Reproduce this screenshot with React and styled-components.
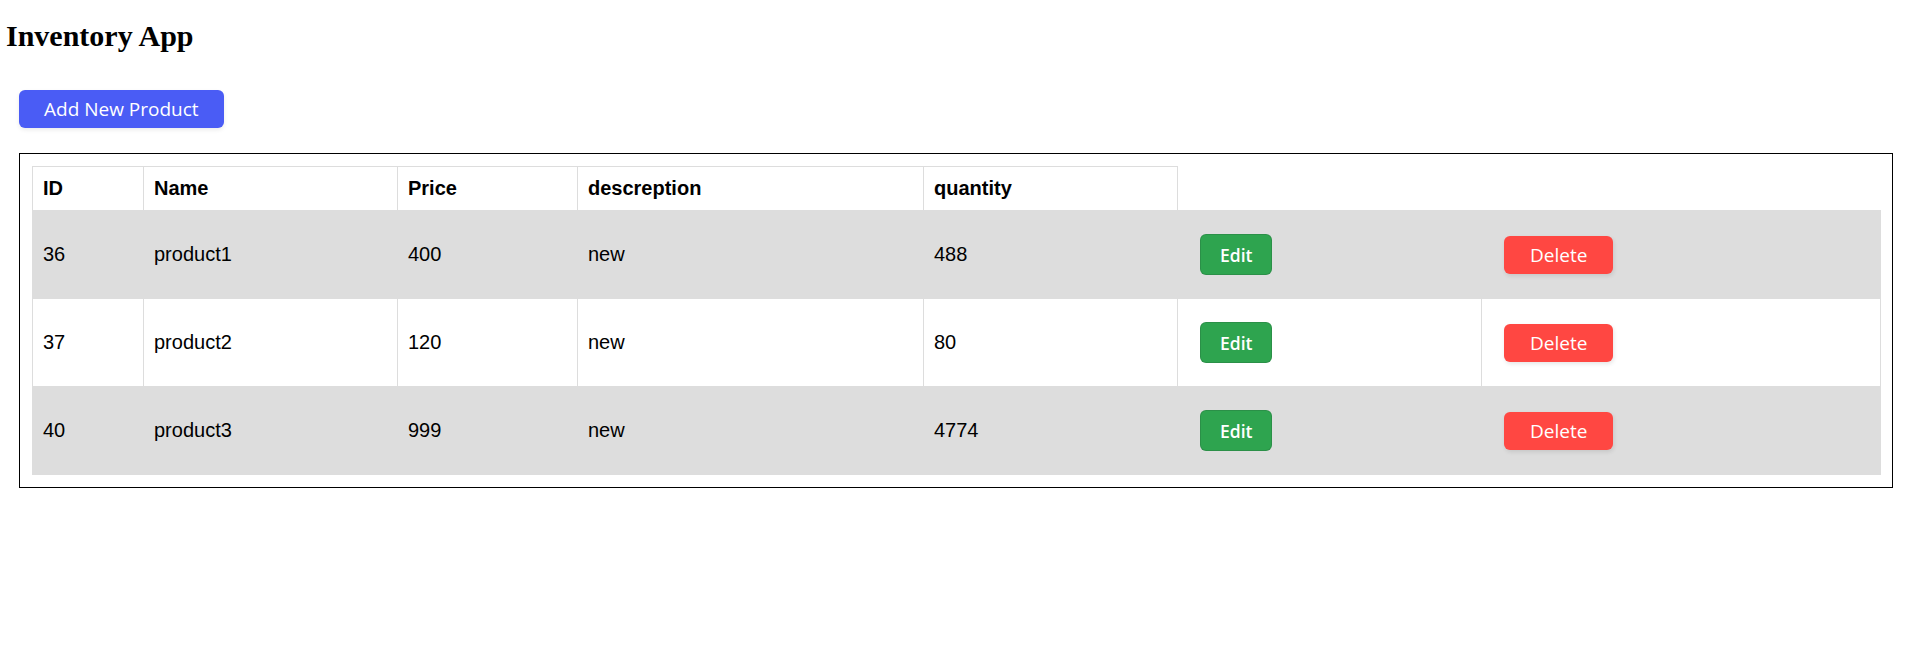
import React from "react";
import styled, { createGlobalStyle } from "styled-components";

const GlobalStyle = createGlobalStyle`
    body {
        margin: 0;
        background: #fff;
        font-family: "Liberation Serif", "Times New Roman", serif;
    }
`;

const Title = styled.h2`
    margin: 19px 0 0 6px;
    font-size: 30px;
    font-weight: 700;
    color: #000;
`;

const Main = styled.div`
    margin: 37px 14px 0 19px;
`;

const AddButton = styled.button`
    height: 38px;
    padding: 0 25px;
    border: none;
    border-radius: 6px;
    background-color: #4a5cf5;
    color: #fff;
    font-family: "Open Sans", "Noto Sans", sans-serif;
    font-size: 19px;
    box-shadow: rgba(0, 0, 0, 0.08) 0 2px 4px;
    cursor: pointer;
`;

const Box = styled.div`
    margin-top: 25px;
    border: 1px solid #000;
    padding: 12px;
`;

const Table = styled.table`
    width: 100%;
    border-collapse: collapse;
    table-layout: fixed;
    font-family: "Liberation Sans", Arial, sans-serif;
    font-size: 20px;
    color: #000;
`;

const Row = styled.tr`
    background-color: ${(props) => (props.$striped ? "#dddddd" : "#fff")};
`;

const Head = styled.th`
    border: 1px solid #dddddd;
    padding: 10px;
    text-align: left;
    font-weight: 700;
`;

const Cell = styled.td`
    border: 1px solid #dddddd;
    padding: 10px;
    height: 67px;
    text-align: left;
    vertical-align: middle;
`;

const EditButton = styled.button`
    margin-left: 12px;
    height: 41px;
    padding: 0 19px;
    border: 1px solid rgba(27, 31, 35, 0.15);
    border-radius: 6px;
    background-color: #2ea44f;
    color: #fff;
    font-family: "Open Sans", "Noto Sans", sans-serif;
    font-size: 17.5px;
    font-weight: 600;
    cursor: pointer;
`;

const DeleteButton = styled.button`
    margin-left: 12px;
    height: 38px;
    padding: 0 26px;
    border: none;
    border-radius: 6px;
    background-color: #ff4742;
    color: #fff;
    font-family: "Open Sans", "Noto Sans", sans-serif;
    font-size: 19px;
    box-shadow: rgba(0, 0, 0, 0.1) 1px 2px 4px;
    cursor: pointer;
`;

const columns = [111, 254, 180, 346, 254, 304, 399];

const products = [
    { id: 36, name: "product1", price: 400, descreption: "new", quantity: 488 },
    { id: 37, name: "product2", price: 120, descreption: "new", quantity: 80 },
    { id: 40, name: "product3", price: 999, descreption: "new", quantity: 4774 },
];

const App = () => {
    return (
        <>
            <GlobalStyle />
            <Title>Inventory App</Title>
            <Main>
                <AddButton>Add New Product</AddButton>
                <Box>
                    <Table>
                        <colgroup>
                            {columns.map((w, i) => (
                                <col key={i} style={{ width: w }} />
                            ))}
                        </colgroup>
                        <tbody>
                            <Row>
                                <Head>ID</Head>
                                <Head>Name</Head>
                                <Head>Price</Head>
                                <Head>descreption</Head>
                                <Head>quantity</Head>
                            </Row>
                            {products.map((p, i) => (
                                <Row key={p.id} $striped={i % 2 === 0}>
                                    <Cell>{p.id}</Cell>
                                    <Cell>{p.name}</Cell>
                                    <Cell>{p.price}</Cell>
                                    <Cell>{p.descreption}</Cell>
                                    <Cell>{p.quantity}</Cell>
                                    <Cell>
                                        <EditButton>Edit</EditButton>
                                    </Cell>
                                    <Cell>
                                        <DeleteButton>Delete</DeleteButton>
                                    </Cell>
                                </Row>
                            ))}
                        </tbody>
                    </Table>
                </Box>
            </Main>
        </>
    );
};

export default App;
